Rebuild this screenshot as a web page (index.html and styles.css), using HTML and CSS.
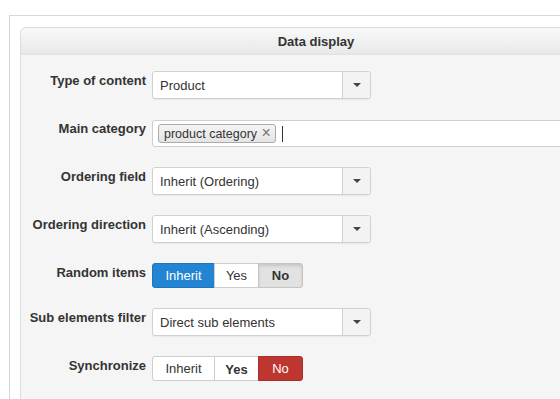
FILE: index.html
```html
<!DOCTYPE html>
<html lang="en">
<head>
  <meta charset="UTF-8">
  <meta name="viewport" content="width=device-width, initial-scale=1.0">
  <title>Data display</title>
  <link rel="stylesheet" href="styles.css">
</head>
<body>
  <div class="page">
    <div class="panel">
      <div class="panel-head">Data display</div>
      <div class="panel-body">

        <div class="row">
          <label class="label">Type of content</label>
          <div class="select">
            <span class="select-text">Product</span>
            <span class="select-arrow"><i class="caret"></i></span>
          </div>
        </div>

        <div class="row">
          <label class="label">Main category</label>
          <div class="tags">
            <span class="tag">product category <span class="tag-close">&times;</span></span>
            <span class="cursor"></span>
          </div>
        </div>

        <div class="row">
          <label class="label">Ordering field</label>
          <div class="select">
            <span class="select-text">Inherit (Ordering)</span>
            <span class="select-arrow"><i class="caret"></i></span>
          </div>
        </div>

        <div class="row">
          <label class="label">Ordering direction</label>
          <div class="select">
            <span class="select-text">Inherit (Ascending)</span>
            <span class="select-arrow"><i class="caret"></i></span>
          </div>
        </div>

        <div class="row">
          <label class="label">Random items</label>
          <div class="btn-group">
            <span class="btn btn-inherit btn-primary">Inherit</span>
            <span class="btn">Yes</span>
            <span class="btn btn-pressed">No</span>
          </div>
        </div>

        <div class="row">
          <label class="label">Sub elements filter</label>
          <div class="select">
            <span class="select-text">Direct sub elements</span>
            <span class="select-arrow"><i class="caret"></i></span>
          </div>
        </div>

        <div class="row">
          <label class="label">Synchronize</label>
          <div class="btn-group">
            <span class="btn btn-inherit">Inherit</span>
            <span class="btn btn-bold">Yes</span>
            <span class="btn btn-danger">No</span>
          </div>
        </div>

      </div>
    </div>
  </div>
</body>
</html>
```

FILE: styles.css
```css
body {
  font-family: "Liberation Sans", Arial, sans-serif;
  margin: 0;
  padding: 0;
  background-color: #fff;
  color: #333;
  overflow: hidden;
}
.page {
  margin: 15px 0 0 9px;
  border-left: 1px solid #d4d4d4;
  border-top: 1px solid #d9d9d9;
  padding: 11px 0 0 10px;
  height: 372px;
}
.panel {
  width: 590px;
  border: 1px solid #dcdcdc;
  border-radius: 6px 6px 0 0;
  background: #f5f5f5;
}
.panel-head {
  height: 26px;
  line-height: 27px;
  text-align: center;
  font-size: 13px;
  font-weight: bold;
  color: #333;
  border-radius: 6px 6px 0 0;
  background: linear-gradient(#f9f9f9, #e8e8e8);
  border-bottom: 1px solid #e2e2e2;
}
.panel-body {
  padding: 16px 0 20px 0;
}
.row {
  display: flex;
  align-items: flex-start;
  margin-bottom: 20px;
}
.label {
  width: 125px;
  margin-right: 6px;
  text-align: right;
  font-size: 13px;
  font-weight: bold;
  line-height: 18px;
  padding-top: 1px;
  color: #333;
}
.select {
  display: flex;
  width: 217px;
  height: 26px;
  border: 1px solid #d0d0d0;
  border-radius: 3px;
  background: #fff;
  box-shadow: 0 1px 1px rgba(0, 0, 0, 0.05);
}
.select-text {
  flex: 1;
  font-size: 13px;
  line-height: 27px;
  padding-left: 7px;
  color: #333;
}
.select-arrow {
  width: 27px;
  border-left: 1px solid #d0d0d0;
  background: #f3f3f3;
  display: flex;
  align-items: center;
  justify-content: center;
  border-radius: 0 3px 3px 0;
}
.caret {
  width: 0;
  height: 0;
  border-left: 4px solid transparent;
  border-right: 4px solid transparent;
  border-top: 4px solid #444;
}
.tags {
  display: flex;
  align-items: center;
  width: 430px;
  height: 25px;
  border: 1px solid #cfcfcf;
  border-radius: 3px 0 0 3px;
  background: #fff;
  padding-left: 5px;
  margin-top: 1px;
}
.tag {
  font-size: 12.5px;
  line-height: 15px;
  padding: 0 4px 0 5px;
  border: 1px solid #aaa;
  border-radius: 3px;
  background: linear-gradient(#f4f4f4, #e4e4e4);
  color: #333;
}
.tag-close {
  font-size: 16px;
  color: #777;
  margin-left: 1px;
}
.cursor {
  width: 1px;
  height: 16px;
  background: #333;
  margin-left: 6px;
}
.btn-group {
  display: flex;
}
.btn {
  box-sizing: border-box;
  width: 45px;
  height: 25px;
  line-height: 23px;
  text-align: center;
  font-size: 13px;
  color: #333;
  background: #fff;
  border: 1px solid #ccc;
  margin-left: -1px;
}
.btn-inherit {
  width: 63px;
  margin-left: 0;
  border-radius: 3px 0 0 3px;
}
.btn:last-child {
  border-radius: 0 3px 3px 0;
}
.btn-primary {
  background: #2384d3;
  border-color: #1f74ba;
  color: #fff;
}
.btn-pressed {
  background: #e2e2e2;
  border-color: #c4c4c4;
  box-shadow: inset 0 2px 3px rgba(0, 0, 0, 0.12);
  font-weight: bold;
}
.btn-bold {
  font-weight: bold;
  padding-top: 1px;
}
.btn-danger {
  background: #bd362f;
  border-color: #a8302a;
  color: #fff;
}
```
